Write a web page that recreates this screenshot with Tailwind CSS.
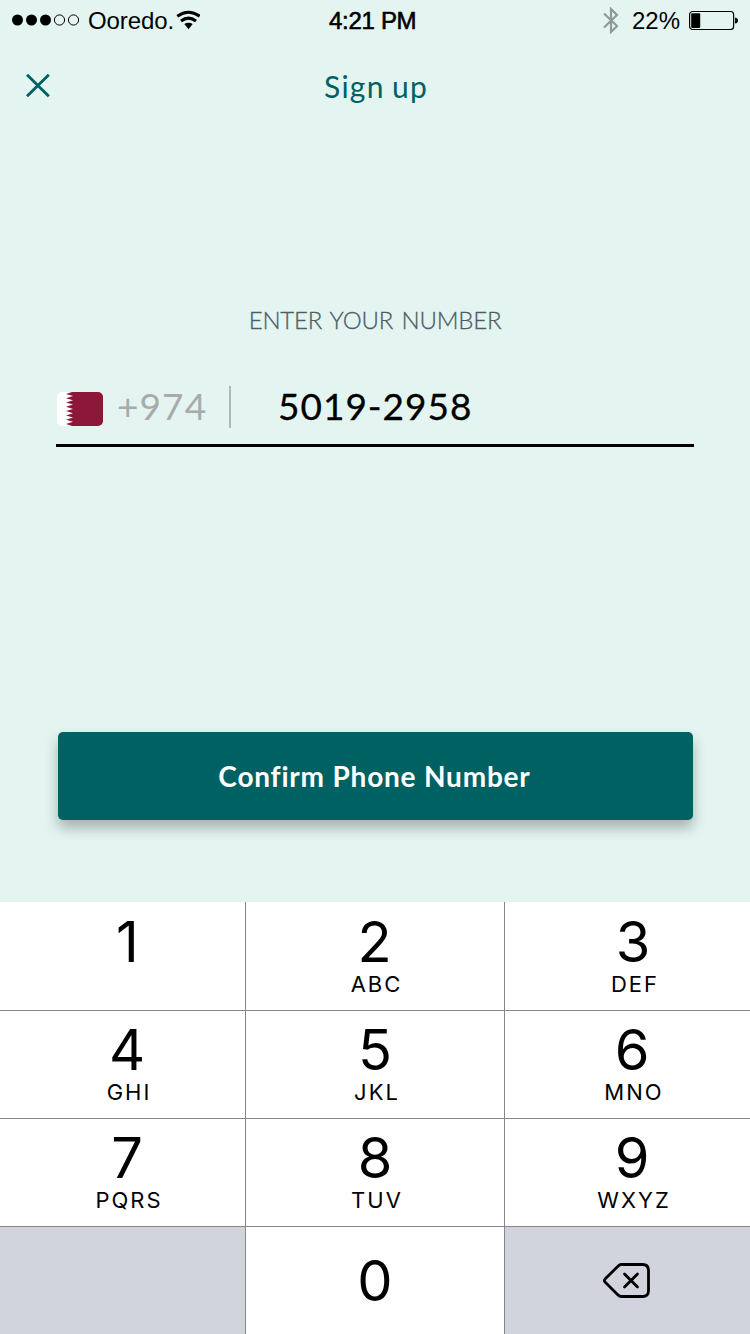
<!DOCTYPE html>
<html lang="en">
<head>
<meta charset="utf-8">
<title>Sign up</title>
<script src="https://cdn.jsdelivr.net/npm/@tailwindcss/browser@4"></script>
</head>
<body class="w-[750px] h-[1334px] overflow-hidden bg-[#e4f5f1] text-black font-['Lato',sans-serif] flex flex-col whitespace-nowrap">
  <header class="h-10 shrink-0 flex items-center justify-between pl-3 pr-3 font-['Liberation_Sans',sans-serif] text-[24px] leading-10">
    <div class="flex w-[317px] items-center">
      <svg class="w-[68px] h-3 shrink-0" viewBox="0 0 68 12"><g><circle cx="5.5" cy="6" r="5.5"/><circle cx="19.5" cy="6" r="5.5"/><circle cx="33.5" cy="6" r="5.5"/></g><g fill="none" stroke="#000"><circle cx="47.5" cy="6" r="5.1"/><circle cx="61.5" cy="6" r="5.1"/></g></svg>
      <span class="ml-2 w-[88px] h-10 leading-[41px] tracking-[-0.1px]">Ooredo.</span>
      <svg class="w-6 h-5 shrink-0" viewBox="0 0 24 20" fill="none" stroke="#000"><path d="M1.300 6.200Q12.500-1.800 23.700 6.200" stroke-width="3"/><path d="M5 11Q12.500 5.300 20 11" stroke-width="3"/><path d="M8.300 14Q12.500 11.300 16.700 14L12.500 19.200Z" fill="#000" stroke="none"/></svg>
    </div>
    <span class="flex-1 h-10 leading-[41px] tracking-[-0.3px] [-webkit-text-stroke:0.6px_#000]">4:21 PM</span>
    <div class="flex items-center">
      <svg class="w-4 h-[27px]" viewBox="0 0 16 27" fill="none" stroke="#8f9a98" stroke-width="2.200"><path d="M1 6.500 14 19 8 25V2l6 6L1 20.500"/></svg>
      <span class="ml-[13px] h-10 leading-[41px]">22%</span>
      <svg class="ml-2 w-[50px] h-5" viewBox="0 0 50 20"><rect x="1.600" y="1.500" width="44" height="18" rx="3" fill="none" stroke="#000" stroke-width="1.200"/><rect x="3.200" y="3.200" width="9" height="14.800" rx="1"/><path d="M47 7.500q3 .5 3 3t-3 3z"/></svg>
    </div>
  </header>
  <div class="h-[92px] shrink-0 grid grid-cols-[1fr_auto_1fr] items-center px-[26px] text-[#006163]">
    <svg class="w-6 h-6" viewBox="0 0 24 24" stroke="currentColor" stroke-width="2.900"><path d="M1 .8 22.800 22.300M22.800 .8 1 22.300"/></svg>
    <h1 class="text-[30px] leading-9 pl-0.5 tracking-[1.200px] [word-spacing:-1.500px]">Sign up</h1>
  </div>
  <main class="h-[770px] shrink-0 flex flex-col px-[56px] pt-[172px]">
    <label for="phone" class="text-center text-[24px] leading-8 font-light text-[#4e5d66] tracking-[-0.2px] [word-spacing:2px] [-webkit-text-stroke:0.300px_#4e5d66]">ENTER YOUR NUMBER</label>
    <div id="phone" class="mt-[49px] h-[62px] border-b-3 border-black flex items-start">
      <svg class="mt-[7px] ml-px w-[46px] h-[34px] shrink-0 rounded-[5px]" viewBox="0 0 46 34"><path fill="#fff" d="M0 0h46v34H0z"/><path fill="#8d1739" d="M46 0H15L9 1.900l7 2.100-7 2.200 7 2.100-7 2.200 7 2.100-7 2.200 7 2.100-7 2.200 7 2.100-7 2.200 7 2.100-7 2.200 7 2.100-7 2.200L15 34H46z"/></svg>
      <span class="ml-[13px] w-[115px] h-[42px] mt-px border-r-2 border-[#b3b6b6] text-[37px] leading-[40px] text-[#a9abab] tracking-[1.100px] pl-px">+974</span>
      <span class="ml-[47px] mt-px text-[37px] leading-[40px] tracking-[1px] [-webkit-text-stroke:0.300px_#000]">5019-2958</span>
    </div>
    <button class="mt-[285px] mx-0.5 w-[635px] h-[88px] shrink-0 rounded-[5px] bg-[#006163] shadow-[0_8px_14px_rgba(0,0,0,0.28)] text-white text-[28px] font-bold tracking-[0.800px] pr-0.5">Confirm Phone Number</button>
  </main>
  <section class="flex-1 grid grid-cols-[246px_259px_245px] grid-rows-[109px_108px_108px_107px] font-['Inter',sans-serif] text-[56px] leading-[60px] text-center bg-white [&>div]:border-[#87878a] [&>div]:flex [&>div]:flex-col [&>div]:justify-end [&>div]:pb-[14px] [&_small]:text-[22px] [&_small]:leading-6 [&_small]:h-6 [&_small]:tracking-[2px] [&_small]:pl-1">
    <div class="border-r border-b pl-[10px]">1<small></small></div>
    <div class="border-r border-b pr-px">2<small>ABC</small></div>
    <div class="border-b pl-[11px]">3<small>DEF</small></div>
    <div class="border-r border-b pl-[9px]">4<small>GHI</small></div>
    <div class="border-r border-b">5<small>JKL</small></div>
    <div class="border-b pl-[9px]">6<small>MNO</small></div>
    <div class="border-r border-b pl-[9px]">7<small>PQRS</small></div>
    <div class="border-r border-b">8<small>TUV</small></div>
    <div class="border-b pl-[9px]">9<small>WXYZ</small></div>
    <div class="border-r bg-[#d1d4dd]"></div>
    <div class="border-r"><span class="mb-[9px]">0</span></div>
    <div class="bg-[#d1d4dd] pl-[98px]">
      <svg class="w-[47px] h-[35px] mb-[22px]" viewBox="0 0 47 35" fill="none" stroke="#000" stroke-width="2.800" stroke-linejoin="round" stroke-linecap="round"><path d="M18 1.500H39.500Q45.500 1.500 45.500 7.500V27.500Q45.500 33.500 39.500 33.500H18.500Q16.500 33.500 15 32L2 19Q.8 17.500 2 16L15 3.200Q16.500 1.500 18.500 1.500Z"/><path d="M21.500 11 34.500 24M34.500 11 21.500 24"/></svg>
    </div>
  </section>
</body>
</html>
